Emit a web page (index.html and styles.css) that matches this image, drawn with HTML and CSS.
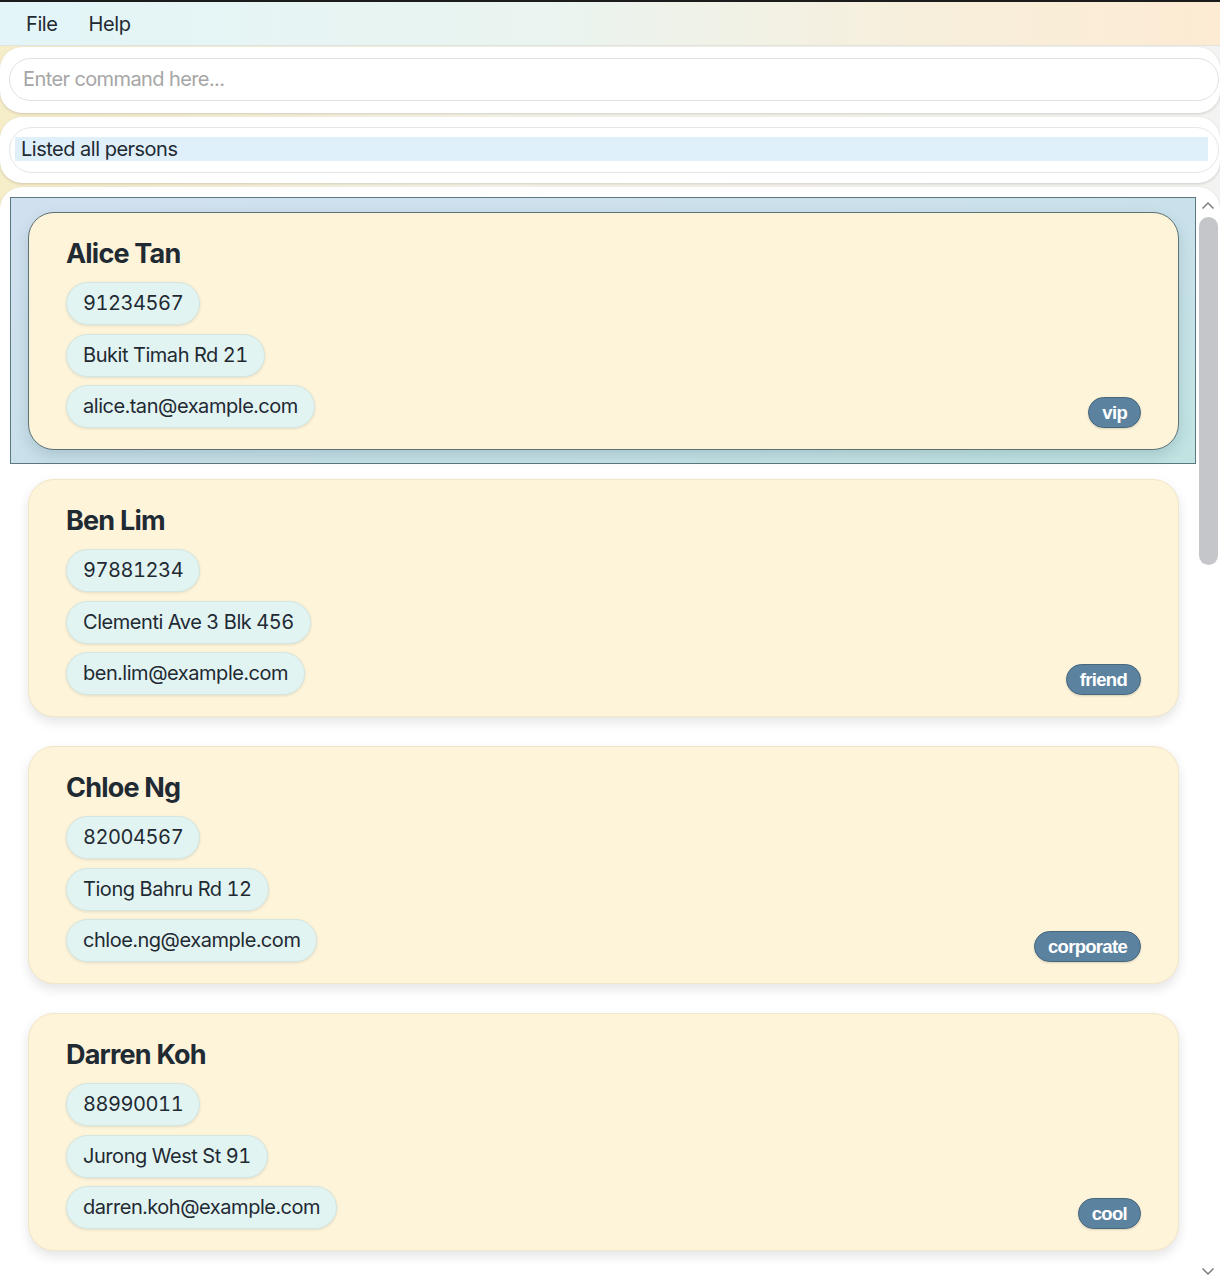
FILE: index.html
```html
<!DOCTYPE html>
<html>
<head>
<meta charset="utf-8">
<link rel="stylesheet" href="styles.css">
</head>
<body>
<div class="app">
  <div class="menubar">
    <span class="menu-item">File</span>
    <span class="menu-item">Help</span>
  </div>
  <div class="panel cmd-panel">
    <div class="cmd-input">Enter command here...</div>
  </div>
  <div class="panel result-panel">
    <div class="result-field"><div class="result-msg">Listed all persons</div></div>
  </div>
  <div class="panel list-panel">
    <div class="cells">
      <div class="cell selected">
        <div class="card">
          <div class="info">
            <div class="name">Alice Tan</div>
            <div class="chips">
              <span class="chip">91234567</span>
              <span class="chip">Bukit Timah Rd 21</span>
              <span class="chip">alice.tan@example.com</span>
            </div>
          </div>
          <span class="tag">vip</span>
        </div>
      </div>
      <div class="cell">
        <div class="card">
          <div class="info">
            <div class="name">Ben Lim</div>
            <div class="chips">
              <span class="chip">97881234</span>
              <span class="chip">Clementi Ave 3 Blk 456</span>
              <span class="chip">ben.lim@example.com</span>
            </div>
          </div>
          <span class="tag">friend</span>
        </div>
      </div>
      <div class="cell">
        <div class="card">
          <div class="info">
            <div class="name">Chloe Ng</div>
            <div class="chips">
              <span class="chip">82004567</span>
              <span class="chip">Tiong Bahru Rd 12</span>
              <span class="chip">chloe.ng@example.com</span>
            </div>
          </div>
          <span class="tag">corporate</span>
        </div>
      </div>
      <div class="cell">
        <div class="card">
          <div class="info">
            <div class="name">Darren Koh</div>
            <div class="chips">
              <span class="chip">88990011</span>
              <span class="chip">Jurong West St 91</span>
              <span class="chip">darren.koh@example.com</span>
            </div>
          </div>
          <span class="tag">cool</span>
        </div>
      </div>
    </div>
    <div class="scrollbar">
      <svg class="chev" width="14" height="9" viewBox="0 0 14 9"><path d="M1.5 7.5 L7 2 L12.5 7.5" fill="none" stroke="#7a7d82" stroke-width="1.5"/></svg>
      <div class="thumb"></div>
      <div class="track-rest"></div>
      <svg class="chev" width="14" height="9" viewBox="0 0 14 9"><path d="M1.5 1.5 L7 7 L12.5 1.5" fill="none" stroke="#7a7d82" stroke-width="1.5"/></svg>
    </div>
  </div>
</div>
</body>
</html>
```

FILE: styles.css
```css
* { box-sizing: border-box; }

html, body {
  margin: 0;
  padding: 0;
}

body {
  width: 1220px;
  height: 1280px;
  overflow: hidden;
  font-family: Inter, "Noto Sans", sans-serif;
  color: #1f2a33;
  background: linear-gradient(to right, #f6edc9 0%, #f7f4e8 40%, #f3f3f1 100%);
}

.app {
  display: flex;
  flex-direction: column;
  height: 1280px;
}

.menubar {
  height: 46px;
  border-top: 2px solid #1c1c1c;
  background: linear-gradient(to right, #e3f5f8 0%, #eaf4f0 45%, #f7efdc 75%, #fdebd3 100%);
  display: flex;
  align-items: center;
  gap: 31px;
  padding-left: 26px;
  font-size: 20px;
  letter-spacing: -0.4px;
  border-bottom: 1px solid #e2e2de;
}

.menu-item {
  line-height: 24px;
  color: #1f2a33;
}

.panel {
  background: #ffffff;
  border-radius: 22px;
  box-shadow: 0 1px 3px rgba(0, 0, 0, 0.16);
}

.cmd-panel {
  margin-top: 1px;
  height: 66px;
  padding: 11px 1px 0 9px;
}

.cmd-input {
  height: 43px;
  border: 1.5px solid #e1e1e1;
  border-radius: 22px;
  padding-left: 13px;
  font-size: 20px;
  line-height: 40px;
  letter-spacing: -0.6px;
  color: #a6a6a6;
}

.result-panel {
  margin-top: 4px;
  height: 66px;
  padding: 10px 1px 0 9px;
}

.result-field {
  height: 46px;
  border: 1.5px solid #e6e6e6;
  border-radius: 23px;
  padding: 8.5px 10px 0 5px;
}

.result-msg {
  height: 24px;
  background: #dff0fa;
  font-size: 20px;
  line-height: 24px;
  letter-spacing: -0.5px;
  padding-left: 6px;
  color: #1f2a33;
}

.list-panel {
  margin-top: 4px;
  flex: 1;
  display: flex;
  padding: 10px 0 0 10px;
  border-radius: 22px 22px 0 0;
  min-height: 0;
}

.cells {
  flex: 1;
  overflow: hidden;
}

.cell {
  border: 1px solid transparent;
  padding: 14px 16px 13px 17px;
}

.cell.selected {
  background: linear-gradient(to bottom right, #d1e0ef 0%, #c9e1ea 55%, #c1e4e2 100%);
  border-color: #5c7880;
}

.card {
  height: 238px;
  background: #fdf4da;
  border: 1px solid #f1e6c6;
  border-radius: 26px;
  padding: 21px 37px 21px 37px;
  display: flex;
  justify-content: space-between;
  align-items: flex-end;
  box-shadow: 0 5px 12px rgba(0, 0, 0, 0.11);
}

.selected .card {
  border-color: #5d7173;
  box-shadow: 0 6px 14px rgba(40, 80, 90, 0.18);
}

.info {
  display: flex;
  flex-direction: column;
  align-items: flex-start;
}

.name {
  font-size: 27px;
  font-weight: 700;
  line-height: 40px;
  letter-spacing: -0.8px;
  margin-bottom: 8px;
  color: #1f2a33;
}

.chips {
  display: flex;
  flex-direction: column;
  align-items: flex-start;
  gap: 8.5px;
}

.chip {
  height: 43px;
  padding: 0 16px;
  border-radius: 22px;
  background: #e2f4f2;
  border: 1px solid #d3e6e1;
  box-shadow: 0 1px 3px rgba(0, 0, 0, 0.1);
  font-size: 20px;
  line-height: 41px;
  letter-spacing: -0.45px;
  font-feature-settings: "tnum" 1;
  color: #1f2a33;
  white-space: nowrap;
}

.tag {
  height: 31px;
  padding: 0 13px;
  border-radius: 16px;
  background: #5b83a0;
  border: 1px solid #46677c;
  color: #ffffff;
  font-family: "Liberation Sans", Arial, sans-serif;
  font-weight: 700;
  font-size: 18.5px;
  line-height: 29px;
  letter-spacing: -0.7px;
  box-shadow: 0 1px 2px rgba(0, 0, 0, 0.15);
}

.scrollbar {
  width: 24px;
  display: flex;
  flex-direction: column;
  align-items: center;
  padding: 4px 0 4px 0;
}

.chev {
  display: block;
  flex: none;
}

.thumb {
  width: 19px;
  height: 348px;
  margin-top: 7px;
  border-radius: 10px;
  background: #c5c6c9;
  flex: none;
}

.track-rest {
  flex: 1;
}
```
